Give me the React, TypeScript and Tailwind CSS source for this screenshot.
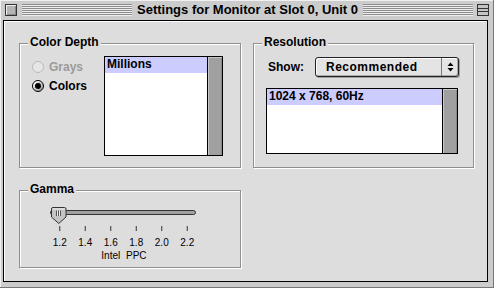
function TitleBar() {
  return (
    <div className="h-[20px] flex items-center pl-[5px] pr-[4px]">
      <div className="w-[12px] h-[12px] border border-[#333] bg-[#b4b4b4] shadow-[inset_1px_1px_0_#eeeeee,inset_-1px_-1px_0_#888888]" />
      <div className="flex-1 h-[12px] ml-[5px] bg-[repeating-linear-gradient(to_bottom,#8c8c8c_0px,#8c8c8c_1px,#eeeeee_1px,#eeeeee_2px)]" />
      <div className="px-[5px] text-[13px] leading-[20px] whitespace-nowrap">Settings for Monitor at Slot 0, Unit 0</div>
      <div className="flex-1 h-[12px] mr-[4px] bg-[repeating-linear-gradient(to_bottom,#8c8c8c_0px,#8c8c8c_1px,#eeeeee_1px,#eeeeee_2px)]" />
      <div className="w-[12px] h-[12px] border border-[#333] bg-[#c4c4c4] flex flex-col justify-evenly">
        <div className="h-px bg-[#333]" />
        <div className="h-px bg-[#333]" />
      </div>
    </div>
  );
}

function Group({ label, className, children }: { label: string; className: string; children?: React.ReactNode }) {
  return (
    <div className={`relative border border-[#8f8f8f] shadow-[inset_1px_1px_0_#ffffff,1px_1px_0_#ffffff] ${className}`}>
      <span className="absolute top-[-9px] left-[8px] px-[2px] bg-[#dddddd] leading-[14px]">{label}</span>
      {children}
    </div>
  );
}

function Radio({ label, checked, disabled }: { label: string; checked?: boolean; disabled?: boolean }) {
  return (
    <div className={`flex items-center h-[12px] gap-[5px] ${disabled ? 'text-[#9a9a9a]' : ''}`}>
      <div
        className={`w-[12px] h-[12px] rounded-full border flex items-center justify-center ${
          disabled
            ? 'border-[#bbbbbb] bg-[#e6e6e6]'
            : 'border-black bg-[#d0d0d0] shadow-[inset_1px_1px_0_#ffffff,inset_-1px_-1px_0_#999999]'
        }`}
      >
        {checked && <div className="w-[6px] h-[6px] rounded-full bg-black" />}
      </div>
      <span className="leading-[14px]">{label}</span>
    </div>
  );
}

function ListBox({ item, className }: { item: string; className: string }) {
  return (
    <div className={`flex border border-black bg-white ${className}`}>
      <div className="flex-1">
        <div className="h-[16px] bg-[#ccccff] px-[2px] leading-[14px] whitespace-nowrap">{item}</div>
      </div>
      <div className="w-[15px] border-l border-black bg-[#a0a0a0] shadow-[inset_1px_1px_0_#c8c8c8,inset_-1px_0_0_#888888]" />
    </div>
  );
}

const ticks = [12.75, 38.25, 63.75, 89.25, 114.75, 140.25];

function Slider() {
  return (
    <svg width="153" height="26" viewBox="0 0 153 26">
      <rect x="3.5" y="5.5" width="145" height="4" rx="2" fill="#a0a0a0" stroke="#333" />
      <path d="M4.5 4 Q4.5 2.5 6 2.5 H17.5 Q19 2.5 19 4 V12 L11.75 18.5 L4.5 12 Z" fill="#c4c4c4" stroke="#333" />
      <path d="M5.5 4 H18" stroke="#f2f2f2" />
      <path d="M9.5 5.5 V11 M11.5 5.5 V11 M13.5 5.5 V11" stroke="#555" />
      <path d="M10.5 5.5 V11 M12.5 5.5 V11" stroke="#eeeeee" />
      {ticks.map(t => (
        <rect key={t} x={t - 0.5} y="21" width="1" height="5" fill="#333" />
      ))}
    </svg>
  );
}

export default function App() {
  return (
    <div className="w-[494px] h-[288px] bg-[#cccccc] flex flex-col font-['Liberation_Sans',Arial,sans-serif] text-[12px] font-bold text-black border-r border-b border-[#777777] shadow-[inset_1px_1px_0_#f0f0f0]">
      <TitleBar />
      <div className="ml-[3px] mr-[5px] mb-[5px] flex-1 border border-black bg-[#dddddd] shadow-[inset_1px_1px_0_#ffffff] pl-[15px] pt-[22px]">
        <div className="flex">
          <Group label="Color Depth" className="w-[222px] h-[125px] flex items-start pl-[12px] pt-[12px]">
            <div className="w-[72px] pt-[5px] flex flex-col gap-[7px]">
              <Radio label="Grays" disabled />
              <Radio label="Colors" checked />
            </div>
            <ListBox item="Millions" className="w-[119px] h-[100px]" />
          </Group>

          <Group label="Resolution" className="ml-[12px] w-[221px] h-[125px] pl-[12px] pt-[13px]">
            <div className="flex items-center">
              <span className="ml-[2px] w-[47px]">Show:</span>
              <div className="w-[144px] h-[20px] flex rounded-[3px] border border-[#222] bg-[#e4e4e4] shadow-[inset_1px_1px_0_#ffffff,inset_-1px_-1px_0_#aaaaaa,1px_1px_0_#a0a0a0]">
                <span className="flex-1 pl-[10px] leading-[18px] tracking-[0.5px]">Recommended</span>
                <div className="w-[17px] border-l border-[#777] flex items-center justify-center">
                  <svg width="7" height="10" viewBox="0 0 7 10">
                    <path d="M3.5 0.5 L6.5 4 H0.5 Z M0.5 6 H6.5 L3.5 9.5 Z" fill="#000" />
                  </svg>
                </div>
              </div>
            </div>
            <ListBox item="1024 x 768, 60Hz" className="mt-[11px] w-[192px] h-[66px]" />
          </Group>
        </div>

        <Group label="Gamma" className="mt-[22px] w-[222px] h-[78px] pt-[14px] pl-[27px]">
          <Slider />
          <div className="mt-[5px] w-[153px] grid grid-cols-6 text-[10px] leading-[13px] font-normal text-center">
            <span>1.2</span>
            <span>1.4</span>
            <span>1.6</span>
            <span>1.8</span>
            <span>2.0</span>
            <span>2.2</span>
            <span />
            <span />
            <span>Intel</span>
            <span>PPC</span>
          </div>
        </Group>
      </div>
    </div>
  );
}
